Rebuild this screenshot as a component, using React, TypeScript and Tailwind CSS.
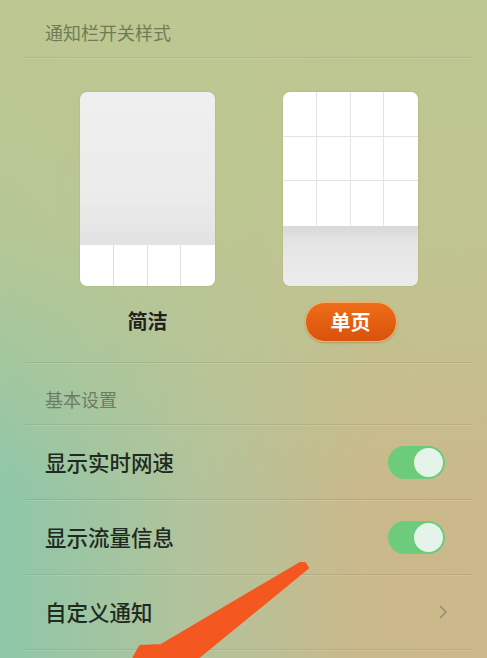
import React from 'react';

const font = { fontFamily: '"Noto Sans CJK SC", "Noto Sans", sans-serif' };

// Switch đơn giản, luôn bật
const Toggle = () => (
  <div className="relative h-[33px] w-[57px] rounded-full bg-[#6dcb7c]">
    <div className="absolute right-[2px] top-[2px] h-[29px] w-[29px] rounded-full bg-[#e4f4e8]" />
  </div>
);

const Divider = () => <div className="h-px bg-[#000000]/[0.07] shadow-[0_1px_0_rgba(255,255,255,0.12)]" />;

const SimpleCard = () => (
  <div className="flex h-[194px] w-[135px] flex-col overflow-hidden rounded-[7px] shadow-[0_0_2px_rgba(0,0,0,0.12)]">
    <div className="flex-1 bg-[linear-gradient(180deg,#efefef_0%,#ebebeb_70%,#e2e2e2_100%)]" />
    <div className="grid h-[41px] grid-cols-4 bg-white">
      <div className="border-r border-[#dedede]" />
      <div className="border-r border-[#dedede]" />
      <div className="border-r border-[#dedede]" />
      <div />
    </div>
  </div>
);

const PageCard = () => (
  <div className="flex h-[194px] w-[135px] flex-col overflow-hidden rounded-[7px] shadow-[0_0_2px_rgba(0,0,0,0.12)]">
    <div className="grid h-[134px] grid-cols-4 grid-rows-3 bg-white">
      {Array.from({ length: 12 }).map((_, i) => (
        <div
          key={i}
          className={`border-[#e4e4e4] ${i % 4 !== 3 ? 'border-r' : ''} ${i < 8 ? 'border-b' : ''}`}
        />
      ))}
    </div>
    <div className="flex-1 bg-[linear-gradient(180deg,#d8d8d8_0%,#e4e4e4_25%,#ececec_100%)]" />
  </div>
);

const Row = ({ label, children }: { label: string; children: React.ReactNode }) => (
  <>
    <div className="flex h-[74px] items-center justify-between pl-5 pr-[28px]">
      <span className="text-[21.5px] font-medium text-[#1f2b1f]">{label}</span>
      {children}
    </div>
    <Divider />
  </>
);

export default function App() {
  return (
    <div
      className="relative h-[658px] w-[487px] overflow-hidden bg-[linear-gradient(180deg,#bdc791_0%,rgba(189,199,145,0.85)_35%,rgba(189,199,145,0)_75%),linear-gradient(90deg,#8ec7a9_0%,#b2c39b_40%,#cab98b_75%,#cbb88c_100%)]"
      style={font}
    >
      <div className="pl-[25px] pr-[14px]">
        <div className="flex h-[57px] items-center pl-5 pt-[8px]">
          <span className="text-[18px] text-[#6e7d58]">通知栏开关样式</span>
        </div>
        <Divider />

        <div className="flex justify-center gap-[68px] pb-[20px] pt-[34px]">
          <div className="flex flex-col items-center">
            <SimpleCard />
            <div className="flex h-[56px] items-end justify-center pb-[6px]">
              <span className="text-[20px] font-bold text-[#222]">简洁</span>
            </div>
          </div>
          <div className="flex flex-col items-center">
            <PageCard />
            <div className="mt-[16px] flex h-[40px] w-[92px] items-center justify-center rounded-full border border-[#f3b06a] bg-[linear-gradient(180deg,#ee6d18_0%,#d9520b_100%)] shadow-[0_1px_2px_rgba(120,60,0,0.3)]">
              <span className="text-[20px] font-bold text-white">单页</span>
            </div>
          </div>
        </div>
        <Divider />

        <div className="flex h-[61px] items-center pl-5 pt-[12px]">
          <span className="text-[18px] text-[#6e7d62]">基本设置</span>
        </div>
        <Divider />

        <Row label="显示实时网速">
          <Toggle />
        </Row>
        <Row label="显示流量信息">
          <Toggle />
        </Row>
        <Row label="自定义通知">
          <svg width="10" height="16" viewBox="0 0 10 16" className="mr-[-3px]">
            <path d="M2 2 L8 8 L2 14" fill="none" stroke="#8c8a6e" strokeWidth="1.4" />
          </svg>
        </Row>
      </div>

      {/* Mũi tên chú thích */}
      <svg className="pointer-events-none absolute left-0 top-0" width="487" height="658" viewBox="0 0 487 658">
        <polygon
          points="300,563 305,563 308,568 193,662 210,700 110,700 140,646 161,645"
          fill="#f4571f"
          stroke="#f4571f"
          strokeWidth="2"
          strokeLinejoin="round"
        />
      </svg>
    </div>
  );
}
